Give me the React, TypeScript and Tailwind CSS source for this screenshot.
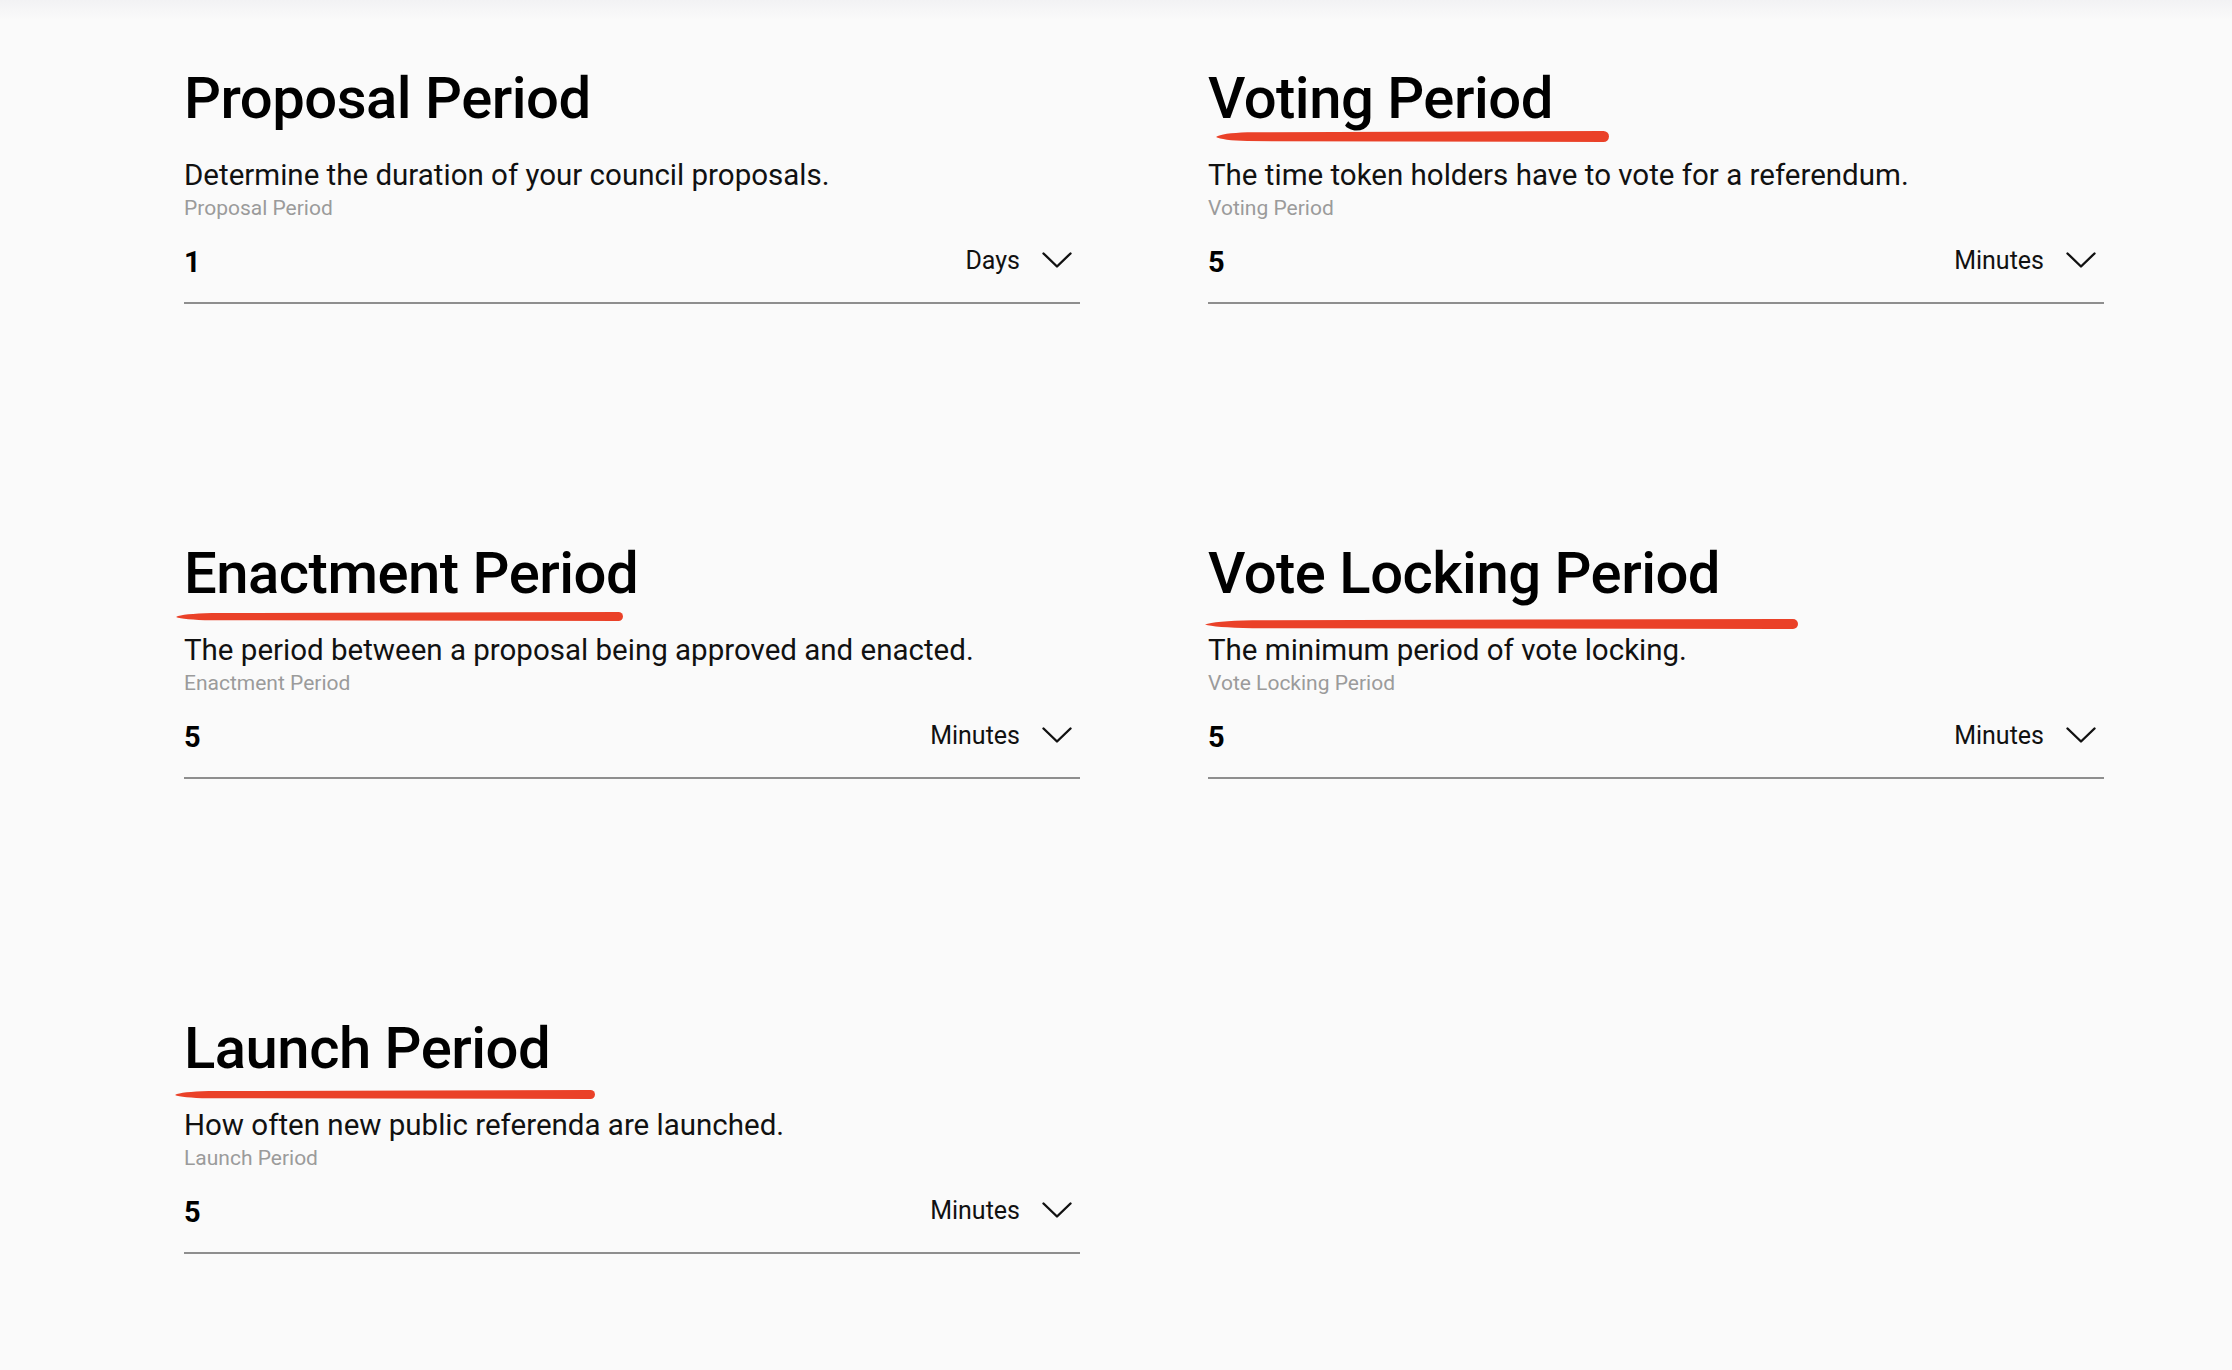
import React from 'react';

type Stroke = { left: number; top: number; width: number; height: number };

interface PeriodField {
  title: string;
  description: string;
  label: string;
  value: string;
  unit: string;
  stroke?: Stroke;
}

const fields: PeriodField[] = [
  {
    title: 'Proposal Period',
    description: 'Determine the duration of your council proposals.',
    label: 'Proposal Period',
    value: '1',
    unit: 'Days',
  },
  {
    title: 'Voting Period',
    description: 'The time token holders have to vote for a referendum.',
    label: 'Voting Period',
    value: '5',
    unit: 'Minutes',
    stroke: { left: 8, top: 62, width: 393, height: 11 },
  },
  {
    title: 'Enactment Period',
    description: 'The period between a proposal being approved and enacted.',
    label: 'Enactment Period',
    value: '5',
    unit: 'Minutes',
    stroke: { left: -8, top: 68, width: 447, height: 9 },
  },
  {
    title: 'Vote Locking Period',
    description: 'The minimum period of vote locking.',
    label: 'Vote Locking Period',
    value: '5',
    unit: 'Minutes',
    stroke: { left: -3, top: 75, width: 593, height: 10 },
  },
  {
    title: 'Launch Period',
    description: 'How often new public referenda are launched.',
    label: 'Launch Period',
    value: '5',
    unit: 'Minutes',
    stroke: { left: -9, top: 71, width: 420, height: 9 },
  },
];

// hand drawn marker underline
const BrushStroke: React.FC<{ stroke: Stroke }> = ({ stroke }) => {
  const { width: w, height: h } = stroke;
  const r = h / 2;
  const d = `M 0 ${h * 0.55} Q ${w * 0.015} ${h * 0.2} ${w * 0.08} ${h * 0.12} L ${w - r} 0 A ${r} ${r} 0 0 1 ${w - r} ${h} L ${w * 0.08} ${h * 0.92} Q ${w * 0.015} ${h * 0.85} 0 ${h * 0.55} Z`;
  return (
    <svg
      className="absolute pointer-events-none"
      style={{ left: stroke.left, top: stroke.top }}
      width={w}
      height={h}
      viewBox={`0 0 ${w} ${h}`}
    >
      <path d={d} fill="#ea4128" />
    </svg>
  );
};

const Chevron = () => (
  <svg width="30" height="16" viewBox="0 0 30 16" fill="none">
    <polyline points="1.5,1.5 15,14.5 28.5,1.5" stroke="#111" strokeWidth="2.4" strokeLinecap="round" strokeLinejoin="round" />
  </svg>
);

const PeriodCard: React.FC<{ field: PeriodField }> = ({ field }) => (
  <div className="flex flex-col">
    <div className="relative">
      <h2 className="text-[58px] leading-[58px] font-medium tracking-[-0.5px] text-black">{field.title}</h2>
      {field.stroke && <BrushStroke stroke={field.stroke} />}
    </div>
    <p className="mt-[34px] text-[29.5px] leading-[29px] text-[#111]">{field.description}</p>
    <p className="mt-2 text-[21px] leading-[21px] text-[#9b9b9b]">{field.label}</p>
    <div className="mt-[11px] h-[74px] pb-[12px] flex items-center justify-between border-b-2 border-[#8e8e8e]">
      <span className="pt-1 text-[29px] leading-[29px] font-bold text-black">{field.value}</span>
      <button className="flex items-center gap-[22px] pr-2 text-[25px] leading-[25px] text-[#111]">
        <span>{field.unit}</span>
        <Chevron />
      </button>
    </div>
  </div>
);

export default function App() {
  return (
    <div className="min-h-screen bg-[#fafafa]" style={{ fontFamily: 'Roboto, "Liberation Sans", sans-serif' }}>
      <div className="h-5 bg-gradient-to-b from-[#f2f2f4] to-[#fafafa]" />
      <div className="pt-[49px] pb-[100px] pl-[184px] pr-[128px]">
        <div className="grid grid-cols-[896px_896px] gap-x-[128px] gap-y-[240px]">
          {fields.map((f) => (
            <PeriodCard key={f.title} field={f} />
          ))}
        </div>
      </div>
    </div>
  );
}
